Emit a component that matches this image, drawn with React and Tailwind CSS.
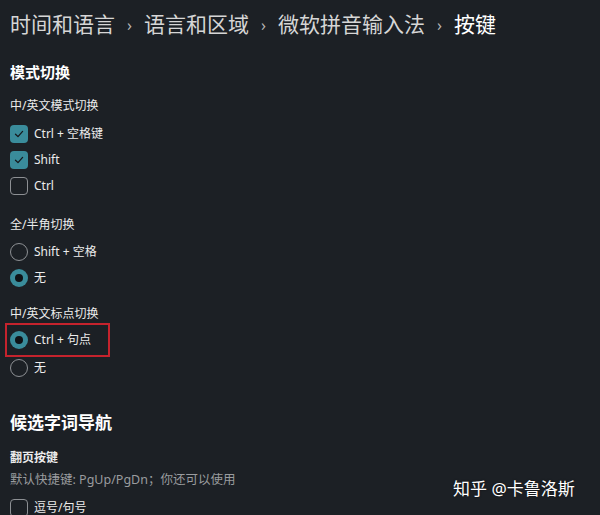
import React from "react";

const FONT = { fontFamily: '"Noto Sans", "Noto Sans CJK SC", sans-serif' };

function Check({ checked, label }) {
  return (
    <div className="flex items-center h-[26px] gap-[6px]">
      {checked ? (
        <span className="w-[18px] h-[18px] rounded-[4px] bg-[#3a8c9b] flex items-center justify-center">
          <svg width="10" height="10" viewBox="0 0 10 10" fill="none">
            <path d="M1.5 5.2 L4 7.6 L8.6 2.4" stroke="#16191d" strokeWidth="1.3" strokeLinecap="round" strokeLinejoin="round" />
          </svg>
        </span>
      ) : (
        <span className="w-[18px] h-[18px] rounded-[4px] border border-[#8d9094]" />
      )}
      <span className="text-[12px] text-[#ececec]">{label}</span>
    </div>
  );
}

function Radio({ checked, label, boxed }) {
  return (
    <div className="relative flex items-center h-[26px] gap-[6px]">
      {boxed && (
        <span className="absolute -left-[5px] -top-[4px] w-[105px] h-[34px] border-2 border-[#c5232d]" />
      )}
      {checked ? (
        <span className="w-[18px] h-[18px] rounded-full bg-[#3a8c9b] flex items-center justify-center">
          <span className="w-[8px] h-[8px] rounded-full bg-[#0f1216]" />
        </span>
      ) : (
        <span className="w-[18px] h-[18px] rounded-full border border-[#8d9094]" />
      )}
      <span className="text-[12px] text-[#ececec]">{label}</span>
    </div>
  );
}

function Chevron() {
  return <span className="mx-[12px] text-[16px] text-[#b5b5b5]">›</span>;
}

export default function App() {
  return (
    <div style={FONT} className="relative w-[600px] h-[515px] overflow-hidden bg-[#1c2025] px-[10px]">
      <div className="h-[50px] flex items-center text-[21px] text-[#d6d6d6] whitespace-nowrap">
        <span>时间和语言</span>
        <Chevron />
        <span>语言和区域</span>
        <Chevron />
        <span>微软拼音输入法</span>
        <Chevron />
        <span className="text-white">按键</span>
      </div>
      <div className="h-[44px] flex items-center text-[15px] font-semibold text-white">模式切换</div>
      <div className="h-[24px] flex items-center text-[12px] text-[#ececec]">中/英文模式切换</div>
      <div className="mt-[3px]">
        <Check checked label="Ctrl + 空格键" />
        <Check checked label="Shift" />
        <Check label="Ctrl" />
      </div>
      <div className="mt-[14px] h-[24px] flex items-center text-[12px] text-[#ececec]">全/半角切换</div>
      <div className="mt-[2px]">
        <Radio label="Shift + 空格" />
        <Radio checked label="无" />
      </div>
      <div className="mt-[11px] h-[24px] flex items-center text-[12px] text-[#ececec]">中/英文标点切换</div>
      <div className="mt-[1px]">
        <Radio checked boxed label="Ctrl + 句点" />
        <div className="mt-[2px]">
          <Radio label="无" />
        </div>
      </div>
      <div className="mt-[24px] h-[36px] flex items-center text-[17px] font-semibold text-white">候选字词导航</div>
      <div className="mt-[5px] h-[24px] flex items-center text-[12px] font-semibold text-[#ececec]">翻页按键</div>
      <div className="h-[20px] flex items-center text-[12.5px] text-[#9a9c9f]">默认快捷键: PgUp/PgDn；你还可以使用</div>
      <div className="mt-[5px]">
        <Check label="逗号/句号" />
      </div>
      <div className="absolute left-[453px] top-[476px] text-[17px] text-white whitespace-nowrap [text-shadow:0_0_2px_rgba(0,0,0,0.6)]">
        知乎 @卡鲁洛斯
      </div>
    </div>
  );
}
